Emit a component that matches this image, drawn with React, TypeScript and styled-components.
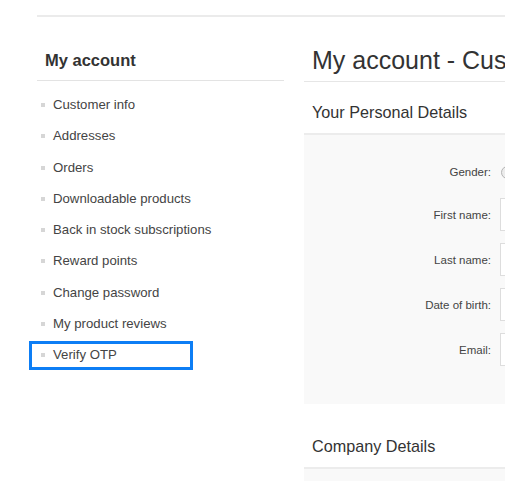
import React from "react";
import styled, { createGlobalStyle } from "styled-components";

const Global = createGlobalStyle`
  html, body { margin: 0; padding: 0; background: #fff; overflow: hidden; }
  body { font-family: "Liberation Sans", Arial, sans-serif; color: #444; }
`;

const Page = styled.div`
  width: 505px;
  height: 481px;
  overflow: hidden;
  padding: 15px 0 0 37px;
  box-sizing: border-box;
`;

const Master = styled.div`
  width: 720px;
  border-top: 2px solid #ebebeb;
  display: flex;
  gap: 20px;
  align-items: flex-start;
`;

const Side = styled.aside`
  width: 247px;
  flex: none;
`;

const SideTitle = styled.div`
  margin-top: 33px;
  padding: 0 8px 10px;
  line-height: 20px;
  font-size: 16.5px;
  font-weight: bold;
  color: #333;
  border-bottom: 1px solid #e3e3e3;
`;

const NavList = styled.ul`
  list-style: none;
  margin: 0;
  padding: 8px 0 0;
`;

const NavItem = styled.li<{ $highlighted?: boolean }>`
  position: relative;
  height: 31.25px;
  line-height: 31.25px;
  padding-left: 16px;
  font-size: 13.2px;
  color: #444;
  &::before {
    content: "";
    position: absolute;
    left: 4px;
    top: 14px;
    width: 4px;
    height: 4px;
    background: #d6d6d6;
  }
  ${(p) =>
    p.$highlighted &&
    `
    &::after {
      content: "";
      position: absolute;
      left: -8px;
      top: 1.5px;
      width: 164px;
      height: 29px;
      box-sizing: border-box;
      border: 3px solid #0d7ef5;
    }
  `}
`;

const Main = styled.main`
  flex: 1;
`;

const PageTitle = styled.h1`
  margin: 28px 0 0;
  padding: 0 8px 6px;
  line-height: 30px;
  font-size: 25px;
  font-weight: normal;
  color: #333;
  white-space: nowrap;
  border-bottom: 1px solid #e6e6e6;
`;

const SectionTitle = styled.div<{ $gap: number }>`
  margin-top: ${(p) => p.$gap}px;
  padding: 0 8px 9px;
  line-height: 24px;
  font-size: 16.2px;
  color: #333;
  border-bottom: 2px solid #ececec;
`;

const Panel = styled.div`
  background: #f9f9f9;
  padding: 27px 0 26px;
`;

const TailPanel = styled.div`
  background: #f9f9f9;
  height: 40px;
`;

const Row = styled.div<{ $short?: boolean }>`
  display: flex;
  align-items: center;
  gap: 9px;
  height: ${(p) => (p.$short ? 20 : 33)}px;
  margin-bottom: ${(p) => (p.$short ? 16 : 12)}px;
`;

const Label = styled.label`
  width: 187px;
  text-align: right;
  font-size: 11.5px;
  color: #444;
`;

const Input = styled.div`
  width: 300px;
  height: 33px;
  box-sizing: border-box;
  border: 1px solid #ddd;
  background: #fff;
`;

const Radio = styled.span`
  width: 13px;
  height: 13px;
  box-sizing: border-box;
  border-radius: 50%;
  border: 1px solid #b5b5b5;
  background: #ececec;
  margin-left: 1px;
`;

const fields = ["First name:", "Last name:", "Date of birth:", "Email:"];
const nav = [
  "Customer info",
  "Addresses",
  "Orders",
  "Downloadable products",
  "Back in stock subscriptions",
  "Reward points",
  "Change password",
  "My product reviews",
  "Verify OTP",
];

export default function App() {
  return (
    <>
      <Global />
      <Page>
        <Master>
          <Side>
            <SideTitle>My account</SideTitle>
            <NavList>
              {nav.map((n) => (
                <NavItem key={n} $highlighted={n === "Verify OTP"}>
                  {n}
                </NavItem>
              ))}
            </NavList>
          </Side>
          <Main>
            <PageTitle>My account - Customer info</PageTitle>
            <SectionTitle $gap={18}>Your Personal Details</SectionTitle>
            <Panel>
              <Row $short>
                <Label>Gender:</Label>
                <Radio />
              </Row>
              {fields.map((f) => (
                <Row key={f}>
                  <Label>{f}</Label>
                  <Input />
                </Row>
              ))}
            </Panel>
            <SectionTitle $gap={30}>Company Details</SectionTitle>
            <TailPanel />
          </Main>
        </Master>
      </Page>
    </>
  );
}
